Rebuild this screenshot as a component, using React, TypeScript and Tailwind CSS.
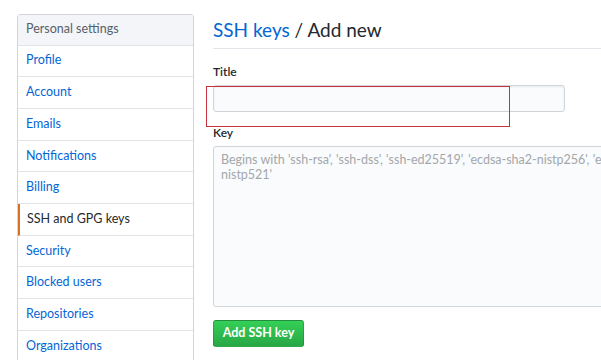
import React from "react";

const items = [
  "Profile",
  "Account",
  "Emails",
  "Notifications",
  "Billing",
  "SSH and GPG keys",
  "Security",
  "Blocked users",
  "Repositories",
  "Organizations",
];

export default function App() {
  return (
    <div
      className="relative w-[601px] h-[360px] overflow-hidden bg-white flex pl-[17px] pt-[14px]"
      style={{ fontFamily: "Lato, 'Noto Sans', sans-serif" }}
    >
      <nav className="w-[177px] shrink-0 self-start border border-[#d1d5da] rounded-t-[3px]">
        <div className="h-[30.5px] flex items-center px-[8px] bg-[#f3f5f8] border-b border-[#e1e4e8] text-[12.5px] text-[#586069]">
          Personal settings
        </div>
        {items.map((it) => {
          const sel = it === "SSH and GPG keys";
          return (
            <div
              key={it}
              className={
                sel
                  ? "h-[31.7px] flex items-center pl-[7px] border-l-2 border-l-[#d8722a] border-b border-b-[#e1e4e8] text-[12.5px] text-[#24292e]"
                  : "h-[31.7px] flex items-center pl-[8px] border-b border-[#e1e4e8] text-[12.5px] text-[#0366d6]"
              }
            >
              {it}
            </div>
          );
        })}
      </nav>
      <main className="ml-[19px] flex-1 min-w-0 flex flex-col">
        <div className="h-[35px] border-b border-[#e1e4e8] pb-[4px]">
          <h1 className="text-[19px] leading-[31px] font-normal text-[#24292e]">
            <span className="text-[#0366d6]">SSH keys</span> / Add new
          </h1>
        </div>
        <label className="mt-[14px] text-[12px] leading-[18px] font-semibold text-[#24292e]">
          Title
        </label>
        <input
          className="mt-[4px] w-[352px] h-[27px] bg-[#fafbfc] border border-[#d1d5da] rounded-[3px] shadow-[inset_0_1px_2px_rgba(27,31,35,0.075)] outline-none"
        />
        <label className="mt-[12px] text-[12px] leading-[18px] font-semibold text-[#24292e]">
          Key
        </label>
        <textarea
          className="mt-[4px] w-[600px] h-[161px] shrink-0 bg-[#fafbfc] border border-[#d1d5da] rounded-[3px] px-[7px] pt-[5px] text-[12.5px] leading-[15px] resize-none outline-none placeholder:text-[#a3a7ab]"
          placeholder={
            "Begins with 'ssh-rsa', 'ssh-dss', 'ssh-ed25519', 'ecdsa-sha2-nistp256', 'ecdsa-sha2-nistp384', or 'ecdsa-sha2-\nnistp521'"
          }
        />
        <div className="mt-[12px]">
          <button className="h-[27px] w-[91px] rounded-[3px] border border-[rgba(27,31,35,0.2)] bg-gradient-to-b from-[#34d058] to-[#28a745] text-white text-[12.5px] font-bold">
            Add SSH key
          </button>
        </div>
      </main>
      <div className="absolute left-[206px] top-[86px] w-[304px] h-[41px] border border-[#c8323c]" />
    </div>
  );
}
